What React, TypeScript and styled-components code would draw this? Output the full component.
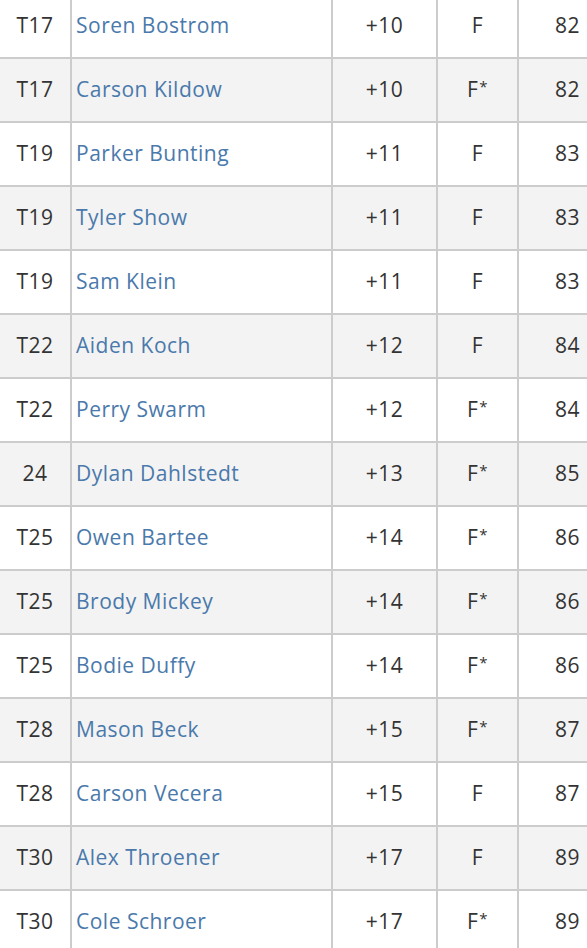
import React from "react";
import styled, { createGlobalStyle } from "styled-components";

const GlobalStyle = createGlobalStyle`
  body {
    margin: 0;
    background: #ffffff;
    font-family: "Open Sans", Lato, sans-serif;
  }
`;

const Board = styled.section`
  display: flex;
  flex-direction: column;
  gap: 2px;
  background: #cccccc;
  margin-top: -5px;
  width: 600px;
  overflow: hidden;
`;

const Row = styled.div<{ $shaded: boolean }>`
  display: grid;
  grid-template-columns: 70px 259px 103px 79px 68px 20px;
  column-gap: 2px;
  height: 62px;

  & > div {
    background: ${(p) => (p.$shaded ? "#f3f3f3" : "#ffffff")};
  }
`;

const Cell = styled.div<{ $align?: "left" | "center" | "right" }>`
  display: flex;
  align-items: center;
  justify-content: ${(p) =>
    p.$align === "left" ? "flex-start" : p.$align === "right" ? "flex-end" : "center"};
  padding: ${(p) => (p.$align === "left" ? "0 0 1px 4px" : p.$align === "right" ? "0 7px 1px 0" : "0 0 1px 0")};
  font-size: 21px;
  line-height: 1;
  letter-spacing: 0.5px;
  color: #333333;
`;

const PlayerName = styled.a`
  color: #4a79ab;
  text-decoration: none;
`;

const Star = styled.span`
  font-size: 15px;
  align-self: flex-start;
  margin-top: 20px;
  margin-left: 1px;
`;

type Entry = {
  pos: string;
  name: string;
  par: string;
  thru: string;
  total: number;
};

const entries: Entry[] = [
  { pos: "T17", name: "Soren Bostrom", par: "+10", thru: "F", total: 82 },
  { pos: "T17", name: "Carson Kildow", par: "+10", thru: "F*", total: 82 },
  { pos: "T19", name: "Parker Bunting", par: "+11", thru: "F", total: 83 },
  { pos: "T19", name: "Tyler Show", par: "+11", thru: "F", total: 83 },
  { pos: "T19", name: "Sam Klein", par: "+11", thru: "F", total: 83 },
  { pos: "T22", name: "Aiden Koch", par: "+12", thru: "F", total: 84 },
  { pos: "T22", name: "Perry Swarm", par: "+12", thru: "F*", total: 84 },
  { pos: "24", name: "Dylan Dahlstedt", par: "+13", thru: "F*", total: 85 },
  { pos: "T25", name: "Owen Bartee", par: "+14", thru: "F*", total: 86 },
  { pos: "T25", name: "Brody Mickey", par: "+14", thru: "F*", total: 86 },
  { pos: "T25", name: "Bodie Duffy", par: "+14", thru: "F*", total: 86 },
  { pos: "T28", name: "Mason Beck", par: "+15", thru: "F*", total: 87 },
  { pos: "T28", name: "Carson Vecera", par: "+15", thru: "F", total: 87 },
  { pos: "T30", name: "Alex Throener", par: "+17", thru: "F", total: 89 },
  { pos: "T30", name: "Cole Schroer", par: "+17", thru: "F*", total: 89 },
];

const Thru: React.FC<{ value: string }> = ({ value }) => {
  const starred = value.endsWith("*");
  return (
    <Cell>
      {starred ? value.slice(0, -1) : value}
      {starred && <Star>*</Star>}
    </Cell>
  );
};

const App: React.FC = () => {
  return (
    <React.Fragment>
      <GlobalStyle />
      <Board>
        {entries.map((e, i) => (
          <Row key={i} $shaded={i % 2 === 1}>
            <Cell>{e.pos}</Cell>
            <Cell $align="left">
              <PlayerName href="#">{e.name}</PlayerName>
            </Cell>
            <Cell>{e.par}</Cell>
            <Thru value={e.thru} />
            <Cell $align="right">{e.total}</Cell>
            <Cell />
          </Row>
        ))}
      </Board>
    </React.Fragment>
  );
};

export default App;
